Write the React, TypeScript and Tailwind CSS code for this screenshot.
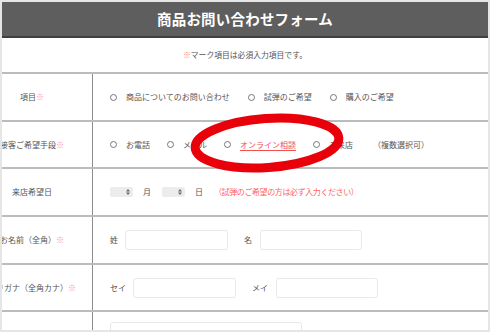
import React from "react";

const font = { fontFamily: '"Noto Sans CJK JP", "Noto Sans", sans-serif' };

function Radio() {
  return <span className="inline-block w-[7px] h-[7px] rounded-full border border-[#777] bg-white shrink-0" />;
}

function Option({ label, link }: { label: string; link?: boolean }) {
  return (
    <div className="flex items-center gap-[9px]">
      <Radio />
      <span className={link ? "text-[#f05050] underline underline-offset-2" : ""}>{label}</span>
    </div>
  );
}

function Select() {
  return (
    <div className="w-[23px] h-[10px] bg-[#ececec] rounded-[2px] flex items-center justify-end pr-[3px]">
      <svg width="4" height="6" viewBox="0 0 4 6">
        <path d="M2 0 L4 2.4 L0 2.4 Z M2 6 L4 3.6 L0 3.6 Z" fill="#666" />
      </svg>
    </div>
  );
}

function Input({ w }: { w: string }) {
  return <div className={`${w} h-[20px] border border-[#e8e8e8] rounded-[3px] bg-white shrink-0`} />;
}

function Row({ label, req, h, children }: { label: string; req?: boolean; h: string; children?: React.ReactNode }) {
  return (
    <div className={`flex ${h} border-t-2 border-[#bcbcbc]`}>
      <div className="w-[91px] shrink-0 border-r border-[#8c8c8c] flex items-center">
        <div className="w-[120px] ml-[-30px] text-center whitespace-nowrap">
          {label}
          {req && <span className="text-[#ff8c8c]">※</span>}
        </div>
      </div>
      <div className="flex items-center pl-[17px] whitespace-nowrap">{children}</div>
    </div>
  );
}

export default function App() {
  return (
    <div className="w-[490px] h-[332px] bg-[#e6e6e6] p-[2px] overflow-hidden relative" style={font}>
      <div className="bg-white h-full overflow-hidden text-[8px] text-[#555] leading-none">
        {/* Header */}
        <div className="h-[36px] bg-[#5e5e5e] border-b-2 border-[#3f3f3f] flex items-center justify-center">
          <h1 className="text-white text-[14.5px] font-bold tracking-[0.2px]">商品お問い合わせフォーム</h1>
        </div>

        {/* Note */}
        <div className="h-[34px] flex items-center justify-center">
          <span className="text-[7.8px]">
            <span className="text-[#ff8c8c]">※</span>マーク項目は必須入力項目です。
          </span>
        </div>

        {/* Form table */}
        <Row label="項目" req h="h-[48px]">
          <div className="flex items-center gap-[18px]">
            <Option label="商品についてのお問い合わせ" />
            <Option label="試弾のご希望" />
            <Option label="購入のご希望" />
          </div>
        </Row>
        <Row label="接客ご希望手段" req h="h-[47px]">
          <div className="flex items-center gap-[17px]">
            <Option label="お電話" />
            <Option label="メール" />
            <Option label="オンライン相談" link />
            <Option label="ご来店" />
            <span className="ml-[3px]">（複数選択可）</span>
          </div>
        </Row>
        <Row label="来店希望日" h="h-[48px]">
          <div className="flex items-center">
            <Select />
            <span className="ml-[10px]">月</span>
            <div className="ml-[11px]">
              <Select />
            </div>
            <span className="ml-[10px]">日</span>
            <span className="ml-[11px] text-[#ff5f5f] tracking-[-0.4px]">（試弾のご希望の方は必ず入力ください）</span>
          </div>
        </Row>
        <Row label="お名前（全角）" req h="h-[48px]">
          <div className="flex items-center">
            <span>姓</span>
            <div className="ml-[7px]">
              <Input w="w-[103px]" />
            </div>
            <span className="ml-[16px]">名</span>
            <div className="ml-[8px]">
              <Input w="w-[102px]" />
            </div>
          </div>
        </Row>
        <Row label="フリガナ（全角カナ）" req h="h-[47px]">
          <div className="flex items-center">
            <span>セイ</span>
            <div className="ml-[7px]">
              <Input w="w-[103px]" />
            </div>
            <span className="ml-[16px]">メイ</span>
            <div className="ml-[8px]">
              <Input w="w-[102px]" />
            </div>
          </div>
        </Row>
        <div className="flex h-[30px] border-t-2 border-[#bcbcbc]">
          <div className="w-[91px] shrink-0 border-r border-[#8c8c8c]" />
          <div className="pl-[17px] pt-[10px]">
            <Input w="w-[192px]" />
          </div>
        </div>
      </div>

      {/* Red annotation ellipse */}
      <svg className="absolute left-0 top-0 pointer-events-none" width="490" height="332">
        <ellipse cx="267" cy="143" rx="72" ry="24.5" fill="none" stroke="#e8000b" strokeWidth="9" transform="rotate(-4 267 143)" />
      </svg>
    </div>
  );
}
